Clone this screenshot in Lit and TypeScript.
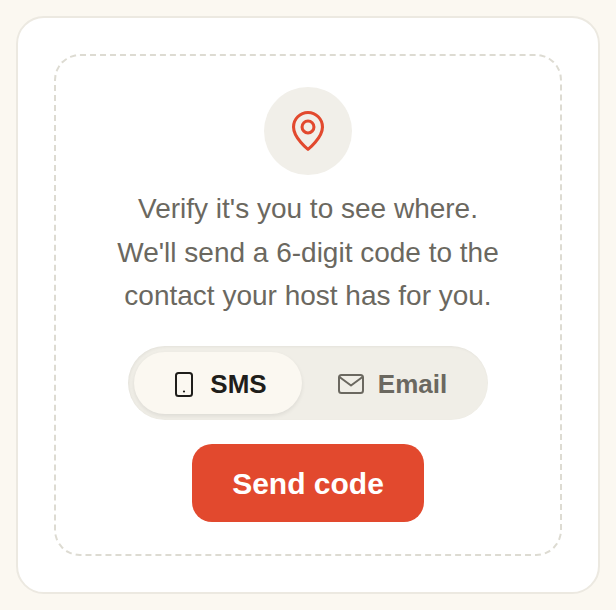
import { LitElement, html, css } from "lit";
import { customElement } from "lit/decorators.js";

@customElement("app-root")
export class AppRoot extends LitElement {
  static styles = css`
    :host { display: block; width: 616px; height: 610px; box-sizing: border-box; padding: 16px; background: #fbf8f1; font-family: "Liberation Sans", Arial, sans-serif; }
    .card { box-sizing: border-box; height: 578px; background: #fff; border: 2px solid #ece9e1; border-radius: 28px; padding: 36px; }
    .dash { box-sizing: border-box; height: 502px; border: 2px dashed #dddbd2; border-radius: 26px; display: flex; flex-direction: column; align-items: center; padding-top: 31px; }
    .pin { width: 88px; height: 88px; border-radius: 50%; background: #f1efe9; display: flex; align-items: center; justify-content: center; }
    .pin svg { width: 46px; height: 46px; display: block; }
    p { margin: 12px 0 0; font-size: 28px; line-height: 43.5px; color: #6b6860; text-align: center; }
    .toggle { margin-top: 28px; width: 360px; height: 74px; box-sizing: border-box; padding: 6px; border-radius: 37px; background: #f0eee7; display: flex; box-shadow: inset 1px 1px 3px rgba(0,0,0,.05); }
    .opt { flex: none; height: 62px; border-radius: 31px; display: flex; align-items: center; justify-content: center; font-size: 26px; font-weight: 700; color: #6b6860; }
    .opt span { padding-top: 3px; }
    .opt.sms { width: 168px; gap: 17px; padding-left: 6px; box-sizing: border-box; background: #fbf8f1; color: #1f1e1b; box-shadow: 0 2px 4px rgba(0,0,0,.08); }
    .opt.email { width: 180px; gap: 13px; }
    .opt svg { display: block; flex: none; margin-top: 3px; }
    button { margin-top: 24px; width: 232px; height: 78px; border: 0; border-radius: 20px; background: #e2492e; color: #fff; font: 700 30px "Liberation Sans", Arial, sans-serif; padding: 3px 0 0; }
  `;

  render() {
    return html`
      <div class="card">
        <div class="dash">
          <div class="pin">
            <svg viewBox="0 0 24 24" fill="none" stroke="#e2492e" stroke-width="1.6" stroke-linecap="round" stroke-linejoin="round">
              <path d="M12 21.6 C12 21.6 4.45 15.6 4.45 9.9 A7.55 7.55 0 0 1 19.55 9.9 C19.55 15.6 12 21.6 12 21.6 Z" />
              <circle cx="12" cy="9.9" r="3.1" />
            </svg>
          </div>
          <p>Verify it's you to see where.<br />We'll send a 6-digit code to the<br />contact your host has for you.</p>
          <div class="toggle">
            <div class="opt sms">
              <svg width="18" height="25" viewBox="0 0 18 25" fill="none" stroke="#1f1e1b" stroke-width="2">
                <rect x="1" y="1" width="16" height="23" rx="2.5" />
                <circle cx="9" cy="19.5" r="1.1" fill="#1f1e1b" stroke="none" />
              </svg>
              <span>SMS</span>
            </div>
            <div class="opt email">
              <svg width="28" height="22" viewBox="0 0 28 22" fill="none" stroke="#6b6860" stroke-width="2" stroke-linejoin="round">
                <rect x="2" y="2" width="24" height="18" rx="2.5" />
                <path d="M2.5 4 L14 12.5 L25.5 4" />
              </svg>
              <span>Email</span>
            </div>
          </div>
          <button>Send code</button>
        </div>
      </div>
    `;
  }
}
